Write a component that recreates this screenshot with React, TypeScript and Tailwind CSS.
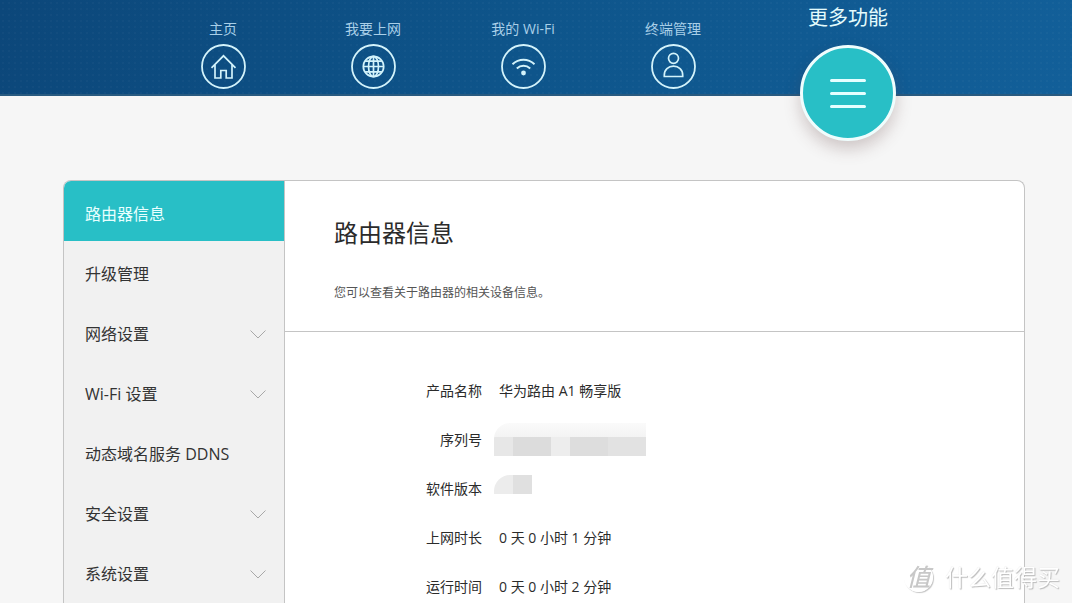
import type { ReactNode } from "react";

type NavItem = { label: string; icon: ReactNode };

const NAV: NavItem[] = [
  {
    label: "主页",
    icon: <path d="M10.500 23.800 22.500 11.800l12 12M14 21v13h5.800v-7.500h5.400v7.500H31V21" />,
  },
  {
    label: "我要上网",
    icon: (
      <>
        <circle cx="22.500" cy="22.500" r="10.200" />
        <ellipse cx="22.500" cy="22.500" rx="5" ry="10.200" />
        <path d="M22.500 12.300v20.400M12.300 22.500h20.400M14.200 17.200h16.600M14.200 27.800h16.600" />
      </>
    ),
  },
  {
    label: "我的 Wi-Fi",
    icon: (
      <>
        <path d="M11.500 20.200c6.400-5.900 15.600-5.900 22 0M15.800 24.400c3.900-3.500 9.500-3.500 13.400 0" strokeWidth="2" />
        <circle cx="22.500" cy="29" r="2.400" fill="currentColor" stroke="none" />
      </>
    ),
  },
  {
    label: "终端管理",
    icon: (
      <>
        <circle cx="22.500" cy="14.300" r="5" />
        <path d="M13.300 32.500v-1.500c0-5.500 4-8.800 9.200-8.800s9.200 3.300 9.200 8.800v1.500z" />
      </>
    ),
  },
];

const MENU = [
  { label: "路由器信息", active: true },
  { label: "升级管理" },
  { label: "网络设置", expandable: true },
  { label: "Wi-Fi 设置", expandable: true },
  { label: "动态域名服务 DDNS" },
  { label: "安全设置", expandable: true },
  { label: "系统设置", expandable: true },
];

function HiddenSerial() {
  return (
    <span className="-my-[7px] -ml-[5px] block overflow-hidden rounded-tl-2xl">
      <span className="block h-[14px] w-[152px] bg-gradient-to-b from-[#fafafa] to-[#f3f3f3]" />
      <span className="flex h-[19px]">
        <span className="w-[19px] bg-[#e7e7e7]" />
        <span className="w-[38px] bg-[#dcdcdc]" />
        <span className="w-[19px] bg-[#ededed]" />
        <span className="w-[38px] bg-[#dddddd]" />
        <span className="w-[38px] bg-[#e2e2e2]" />
      </span>
    </span>
  );
}

function HiddenVersion() {
  return (
    <span className="-mt-1 -ml-[5px] flex h-[19px] overflow-hidden rounded-tl-2xl">
      <span className="w-[19px] bg-[#ececec]" />
      <span className="w-[19px] bg-[#e0e0e0]" />
    </span>
  );
}

const INFO: { label: string; value: ReactNode }[] = [
  { label: "产品名称", value: "华为路由 A1 畅享版" },
  { label: "序列号", value: <HiddenSerial /> },
  { label: "软件版本", value: <HiddenVersion /> },
  { label: "上网时长", value: "0 天 0 小时 1 分钟" },
  { label: "运行时间", value: "0 天 0 小时 2 分钟" },
];

function Header() {
  return (
    <header className="relative z-10 h-24 border-b-2 border-[#285a80] bg-[radial-gradient(#ffffff06_1px,transparent_1px),linear-gradient(100deg,#0c477a,#0e558b_50%,#125f99)] bg-[size:6px_6px,100%_100%] pr-12 pl-[72px]">
      <nav>
        <ul className="flex justify-center">
          {NAV.map((item) => (
            <li key={item.label} className="w-[150px]">
              <a href="#" className="flex flex-col items-center gap-[5px] pt-[19px] text-sm leading-5 text-[#a9cfe8]">
                {item.label}
                <svg
                  className="size-[45px] text-[#d3f3fb]"
                  viewBox="0 0 45 45"
                  fill="none"
                  stroke="currentColor"
                  strokeWidth="1.700"
                >
                  <circle cx="22.500" cy="22.500" r="21.500" strokeWidth="1.800" />
                  {item.icon}
                </svg>
              </a>
            </li>
          ))}
          <li className="w-[200px]">
            <a href="#" className="flex flex-col items-center gap-[13px] pt-1 text-xl leading-7 text-[#e4fbfc]">
              更多功能
              <span className="flex size-24 items-center justify-center rounded-full border-3 border-[#effdfd] bg-[#28bfc6] shadow-[0_8px_16px_rgba(90,60,60,0.25)]">
                <svg className="size-10" viewBox="0 0 40 40" stroke="#e6ffff" strokeWidth="3" strokeLinecap="round">
                  <path d="M3.500 7.500h33M3.500 20.500h33M3.500 33.500h33" />
                </svg>
              </span>
            </a>
          </li>
        </ul>
      </nav>
    </header>
  );
}

function Sidebar() {
  return (
    <aside className="w-[221px] shrink-0 border-r border-[#c4c4c4] bg-[#f1f1f1]">
      <ul>
        {MENU.map((item) => (
          <li key={item.label}>
            <a
              href="#"
              className={
                item.active
                  ? "flex h-[60px] items-center bg-[#28bfc6] pt-1.5 pr-[18px] pl-[21px] text-base text-[#e8ffff]"
                  : "flex h-[60px] items-center justify-between pt-1.5 pr-[18px] pl-[21px] text-base text-[#333]"
              }
            >
              {item.label}
              {item.expandable && (
                <svg className="h-[9px] w-4" viewBox="0 0 16 9" fill="none" stroke="#a8a8a8">
                  <path d="m.5.5 7.500 7.500 7.500-7.500" />
                </svg>
              )}
            </a>
          </li>
        ))}
      </ul>
    </aside>
  );
}

function Watermark() {
  return (
    <div className="pointer-events-none fixed right-3 bottom-2 z-20 flex items-center gap-3 text-white">
      <span className="flex size-[29px] items-center justify-center rounded-full border border-white text-2xl leading-none font-medium text-[#c8c8c8] italic shadow-[1px_1px_1px_#c4c4c4]">
        值
      </span>
      <span className="text-[23px] leading-9 [text-shadow:1px_1px_1px_#bbb,0_0_1px_#d8d8d8]">什么值得买</span>
    </div>
  );
}

export default function App() {
  return (
    <div className="flex min-h-screen flex-col bg-[#f6f6f6] font-['Open_Sans','Noto_Sans_CJK_SC',sans-serif] text-[#2b2b2b]">
      <Header />
      <main className="flex flex-1 pt-[84px] pr-[47px] pl-[63px]">
        <div className="flex flex-1 overflow-hidden rounded-t-lg border border-b-0 border-[#c4c4c4] bg-white">
          <Sidebar />
          <section className="flex-1">
            <div className="h-[151px] border-b border-[#c4c4c4] px-[49px] pt-9">
              <h1 className="text-2xl leading-8">路由器信息</h1>
              <p className="pt-8 text-xs leading-6 text-[#555]">您可以查看关于路由器的相关设备信息。</p>
            </div>
            <dl className="flex flex-col gap-[29px] pt-[49px] text-sm leading-5">
              {INFO.map((row) => (
                <div key={row.label} className="flex h-5 gap-[17px]">
                  <dt className="w-[197px] text-right">{row.label}</dt>
                  <dd>{row.value}</dd>
                </div>
              ))}
            </dl>
          </section>
        </div>
      </main>
      <Watermark />
    </div>
  );
}
